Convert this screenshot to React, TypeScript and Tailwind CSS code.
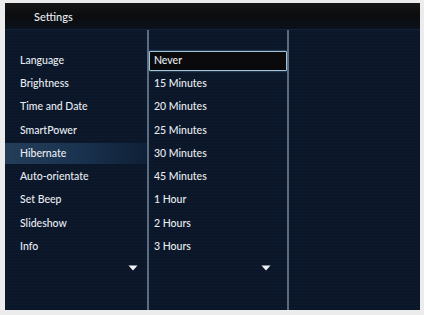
import React from 'react';

const MENU = [
  'Language',
  'Brightness',
  'Time and Date',
  'SmartPower',
  'Hibernate',
  'Auto-orientate',
  'Set Beep',
  'Slideshow',
  'Info',
];

const OPTIONS = [
  'Never',
  '15 Minutes',
  '20 Minutes',
  '25 Minutes',
  '30 Minutes',
  '45 Minutes',
  '1 Hour',
  '2 Hours',
  '3 Hours',
];

function DownArrow() {
  return (
    <svg width="10" height="6" viewBox="0 0 10 6" className="block">
      <path d="M0.5 0.5 H9.5 L5 5.5 Z" fill="#f2f4f7" />
    </svg>
  );
}

export default function App() {
  return (
    <div
      className="w-[424px] h-[315px] bg-[#ececec] pt-[3px] pl-[5px] pr-[4px] pb-[5px]"
      style={{ fontFamily: 'Lato, "Open Sans", sans-serif' }}
    >
      <div className="h-full flex flex-col bg-[#0b1729] text-[#e9edf2] text-[10.5px] font-medium">
        {/* Header bar */}
        <div className="h-[27px] shrink-0 flex items-center pl-[29px] bg-gradient-to-b from-[#151618] via-[#0b0c0e] to-[#0b121c] border-b border-[#14223a]">
          <span className="text-[11px] leading-none">Settings</span>
        </div>

        {/* Columns */}
        <div className="flex-1 flex bg-[repeating-linear-gradient(0deg,#0b1729_0px,#0b1729_2px,#0d1a2d_2px,#0d1a2d_3px)]">
          <div className="w-[142px] shrink-0 flex flex-col pt-[19px]">
            {MENU.map((item) => (
              <div key={item} className="h-[23.25px] flex items-center">
                <div
                  className={
                    item === 'Hibernate'
                      ? 'w-full h-[21px] flex items-center pl-[15px] bg-gradient-to-r from-[#243d58] via-[#1a3350] to-[#0f2036]'
                      : 'w-full h-[21px] flex items-center pl-[15px]'
                  }
                >
                  {item}
                </div>
              </div>
            ))}
            <div className="flex justify-end pr-[9px] pt-[7px]">
              <DownArrow />
            </div>
          </div>

          <div className="w-[2px] shrink-0 bg-[#5a6c82]" />

          <div className="w-[138px] shrink-0 flex flex-col pt-[19px]">
            {OPTIONS.map((opt, i) => (
              <div key={opt} className="h-[23.25px] flex items-center">
                {i === 0 ? (
                  <div className="w-full h-[20px] flex items-center pl-[4px] bg-[#0a0a0c] border-[1.5px] border-[#9fc3d9] rounded-[1px] shadow-[0_0_2px_#6b9ab8]">
                    {opt}
                  </div>
                ) : (
                  <div className="pl-[5px]">{opt}</div>
                )}
              </div>
            ))}
            <div className="flex justify-end pr-[16px] pt-[7px]">
              <DownArrow />
            </div>
          </div>

          <div className="w-[2px] shrink-0 bg-[#5a6c82]" />

          <div className="flex-1" />
        </div>
      </div>
    </div>
  );
}
